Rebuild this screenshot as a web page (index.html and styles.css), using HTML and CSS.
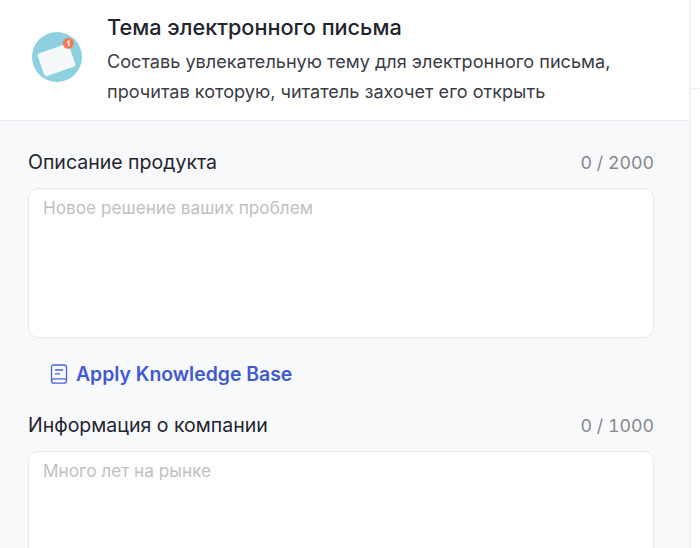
FILE: index.html
```html
<!DOCTYPE html>
<html>
<head>
    <title>Тема электронного письма</title>
    <link rel="stylesheet" href="styles.css">
</head>
<body>
    <div class="page">
        <div class="panel">
            <div class="header">
                <svg class="logo" width="50" height="50" viewBox="0 0 50 50">
                    <circle cx="25" cy="25" r="25" fill="#8dd0e0"/>
                    <g transform="rotate(-19 24.500 28)">
                        <rect x="8" y="16" width="33" height="24" rx="3" fill="#f6f9fa"/>
                        <path d="M9 17 L24.500 29 L40 17 M10 39 L20 26 M39 39 L29 26" fill="none" stroke="#ebf3f5" stroke-width="0.7"/>
                    </g>
                    <circle cx="36.300" cy="11.300" r="5.500" fill="#ee7a57"/>
                    <path d="M35 10.600 L36.800 9 V14" fill="none" stroke="#fff" stroke-width="1.200"/>
                </svg>
                <div class="intro">
                    <h1>Тема электронного письма</h1>
                    <p>Составь увлекательную тему для электронного письма, прочитав которую, читатель захочет его открыть</p>
                </div>
            </div>
            <div class="form">
                <div class="field-head">
                    <label>Описание продукта</label>
                    <span class="count">0 / 2000</span>
                </div>
                <div class="input tall">Новое решение ваших проблем</div>
                <div class="kb">
                    <svg width="18" height="20" viewBox="0 0 18 20" fill="none" stroke="#4a63d8" stroke-width="1.300">
                        <path d="M1.500 3.500 Q1.500 1 4 1 H14 Q16.500 1 16.500 3.500 V17 Q16.500 19.200 14 19.200 H4 Q1.500 19.200 1.500 17 Z"/>
                        <path d="M1.500 16.500 Q1.500 14.800 4 14.800 H16.500 M5 6 H13 M5 9.800 H10"/>
                    </svg>
                    <span>Apply Knowledge Base</span>
                </div>
                <div class="field-head">
                    <label>Информация о компании</label>
                    <span class="count">0 / 1000</span>
                </div>
                <div class="input">Много лет на рынке</div>
            </div>
        </div>
        <div class="side">
            <div class="side-top"></div>
        </div>
    </div>
</body>
</html>
```

FILE: styles.css
```css
html, body { margin: 0; height: 100%; overflow: hidden; }
body { font-family: Inter, "Noto Sans", sans-serif; background: #fff; color: #23242e; }
.page { display: flex; height: 548px; overflow: hidden; }
.panel { width: 689px; flex: none; overflow: hidden; background: #f8f9fb; border-right: 2px solid #eef1f6; }
.side { flex: 1; }
.side-top { height: 88px; border-bottom: 1px solid #eef1f6; }

.header { display: flex; align-items: center; height: 121px; box-sizing: border-box; background: #fff; border-bottom: 1px solid #eceef1; padding: 0 60px 2px 32px; }
.logo { flex: none; margin: 0 25px 4px 0; }
.intro h1 { margin: 0 0 5px; font-size: 21.700px; line-height: 28px; font-weight: 500; }
.intro p { margin: 0; font-size: 18.100px; line-height: 30px; color: #3b3c46; }

.form { padding: 27px 35px 0 28px; }
.field-head { display: flex; justify-content: space-between; font-size: 19.500px; line-height: 28px; margin-bottom: 11px; }
.count { color: #85878d; font-size: 17.800px; padding-top: 1px; font-feature-settings: "tnum"; }
.input { height: 260px; box-sizing: border-box; padding: 8px 14px; background: #fff; border: 1px solid #e6e8ec; border-radius: 10px; font-size: 17.200px; line-height: 22px; color: #bfc0c4; }
.input.tall { height: 150px; }
.kb { display: flex; align-items: center; gap: 8px; box-sizing: border-box; padding: 0 0 2px 22px; height: 73px; color: #4059d2; font-size: 19.400px; font-weight: 600; }
```
